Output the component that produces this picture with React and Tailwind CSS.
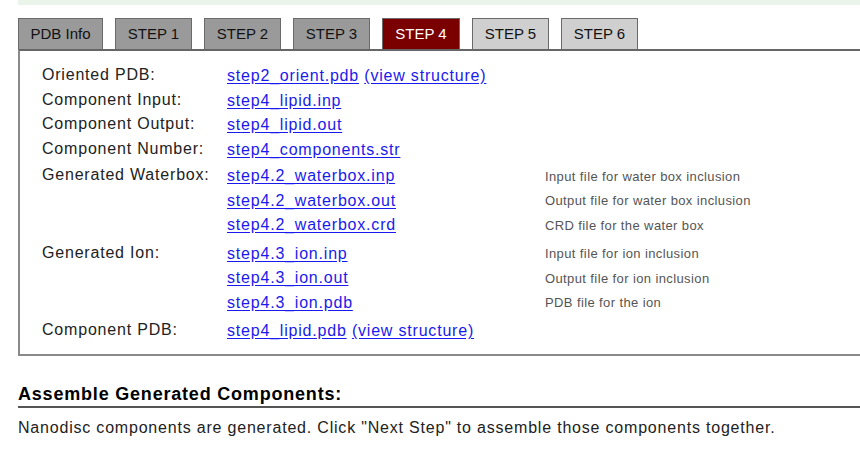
import React from "react";

const tabs = [
  { name: "PDB Info", tone: "dark", w: "w-[85px]" },
  { name: "STEP 1", tone: "dark", w: "w-[77px]" },
  { name: "STEP 2", tone: "dark", w: "w-[77px]" },
  { name: "STEP 3", tone: "dark", w: "w-[77px]" },
  { name: "STEP 4", tone: "active", w: "w-[78px]" },
  { name: "STEP 5", tone: "light", w: "w-[77px]" },
  { name: "STEP 6", tone: "light", w: "w-[77px]" },
];

const tabTone = {
  dark: "bg-[#9a9a9a] text-[#111]",
  active: "bg-[#7a0000] text-white",
  light: "bg-[#cfcfcf] text-[#111]",
};

const rows = [
  { label: "Oriented PDB:", links: [{ name: "step2_orient.pdb", view: true }] },
  { label: "Component Input:", links: [{ name: "step4_lipid.inp" }] },
  { label: "Component Output:", links: [{ name: "step4_lipid.out" }] },
  { label: "Component Number:", links: [{ name: "step4_components.str" }] },
  {
    label: "Generated Waterbox:",
    links: [
      { name: "step4.2_waterbox.inp", desc: "Input file for water box inclusion" },
      { name: "step4.2_waterbox.out", desc: "Output file for water box inclusion" },
      { name: "step4.2_waterbox.crd", desc: "CRD file for the water box" },
    ],
  },
  {
    label: "Generated Ion:",
    links: [
      { name: "step4.3_ion.inp", desc: "Input file for ion inclusion" },
      { name: "step4.3_ion.out", desc: "Output file for ion inclusion" },
      { name: "step4.3_ion.pdb", desc: "PDB file for the ion" },
    ],
  },
  { label: "Component PDB:", links: [{ name: "step4_lipid.pdb", view: true }], last: true },
];

const Link = ({ children }) => (
  <a href="#" className="text-[#1a1aee] underline underline-offset-2">
    {children}
  </a>
);

export default function App() {
  return (
    <div className="w-[860px] h-[458px] overflow-hidden bg-white font-['Liberation_Sans',Arial,sans-serif] text-[#222]">
      {/* leftover of the box above */}
      <div className="ml-[18px] h-[5px] bg-[#eaf4ea]" />

      <div className="ml-[18px] mt-[13px] w-[900px]">
        {/* Tabs */}
        <div className="flex items-end gap-[12px]">
          {tabs.map((t) => (
            <div
              key={t.name}
              className={`${t.w} h-[31px] flex items-center justify-center border border-b-0 border-[#6a6a6a] text-[15px] ${tabTone[t.tone]}`}
            >
              {t.name}
            </div>
          ))}
        </div>

        {/* Panel */}
        <div className="border-2 border-[#8a8a8a] border-t-[#666] pl-[22px] pt-[13px] pb-[10px] text-[16px] tracking-[0.05em]">
          {rows.map((r) => (
            <div
              key={r.label}
              className={`flex ${r.links.length > 1 ? "py-[2px]" : ""} ${r.last ? "mt-[2px]" : ""}`}
            >
              <div className="w-[185px] shrink-0 leading-[24.5px] -mt-[1px]">{r.label}</div>
              <div className="flex flex-col">
                {r.links.map((l) => (
                  <div key={l.name} className="flex items-center h-[24.5px]">
                    <div className="w-[318px] shrink-0">
                      <Link>{l.name}</Link>
                      {l.view && (
                        <>
                          {" "}
                          <Link>(view structure)</Link>
                        </>
                      )}
                    </div>
                    {l.desc && (
                      <span className="text-[13px] tracking-[0.03em] text-[#555]">{l.desc}</span>
                    )}
                  </div>
                ))}
              </div>
            </div>
          ))}
        </div>
      </div>

      {/* Next section */}
      <div className="ml-[18px] mt-[27px] tracking-[0.05em]">
        <h2 className="font-bold text-[18px] text-black leading-[22px] pb-[1px] border-b-2 border-[#555]">
          Assemble Generated Components:
        </h2>
        <p className="mt-[8px] text-[16px] text-[#222]">
          Nanodisc components are generated. Click "Next Step" to assemble those components together.
        </p>
      </div>
    </div>
  );
}
